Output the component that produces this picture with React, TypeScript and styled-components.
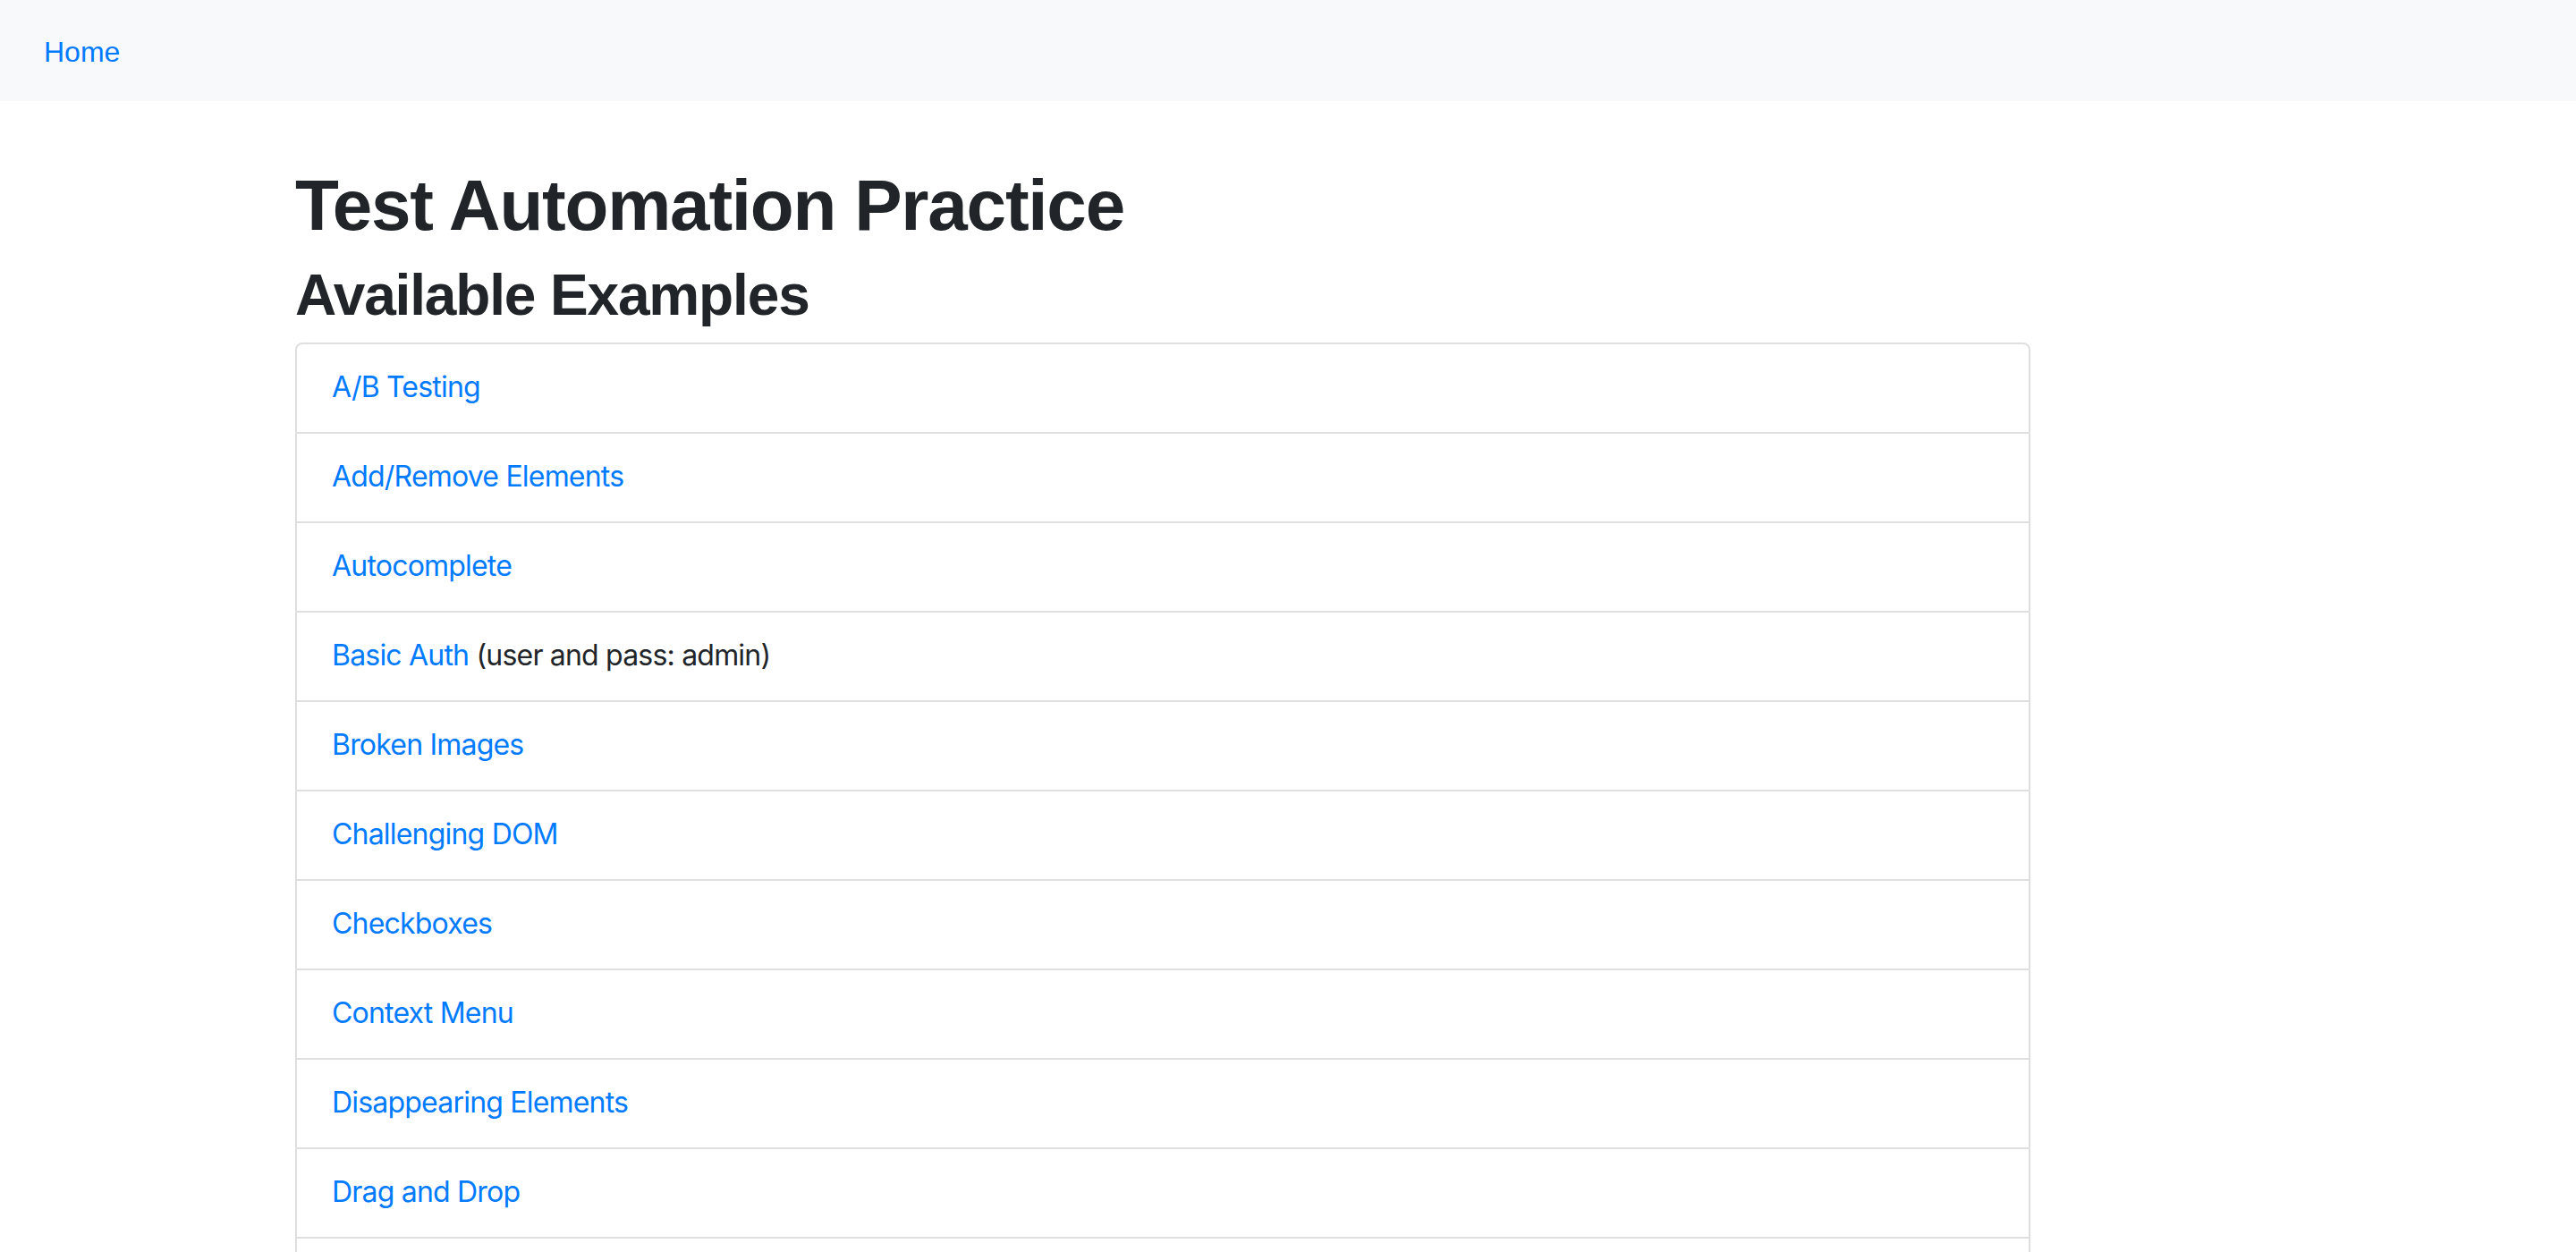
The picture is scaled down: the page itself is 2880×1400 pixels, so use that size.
import React from "react";
import styled, { createGlobalStyle } from "styled-components";

const GlobalStyle = createGlobalStyle`
  html, body {
    margin: 0;
    padding: 0;
    background: #ffffff;
    overflow: hidden;
  }
  body {
    font-family: Inter, "Liberation Sans", sans-serif;
    color: #212529;
  }
  * { box-sizing: border-box; }
`;

const NavBar = styled.nav`
  display: flex;
  align-items: center;
  height: 113px;
  background: #f8f9fa;
  padding: 0 0 0 49px;
`;

const NavLink = styled.a`
  font-family: "Liberation Sans", Arial, sans-serif;
  font-size: 32px;
  line-height: 48px;
  color: #007bff;
  text-decoration: none;
  padding-top: 3px;
`;

const Container = styled.main`
  width: 2220px;
  margin: 0 auto;
  padding-top: 69px;
`;

const Title = styled.h1`
  margin: 0 0 14px 0;
  font-family: "Liberation Sans", Arial, sans-serif;
  font-weight: 700;
  font-size: 80px;
  line-height: 96px;
  letter-spacing: -1.2px;
  color: #212529;
`;

const Subtitle = styled.h2`
  margin: 0 0 14px 0;
  font-family: "Liberation Sans", Arial, sans-serif;
  font-weight: 700;
  font-size: 64px;
  line-height: 77px;
  letter-spacing: -1.15px;
  color: #212529;
`;

const List = styled.ul`
  list-style: none;
  margin: 0;
  padding: 0;
  width: 1940px;
  border: 2px solid #dfdfdf;
  border-radius: 8px;
  overflow: hidden;
`;

const Item = styled.li`
  font-family: Inter, "Liberation Sans", sans-serif;
  font-size: 32px;
  line-height: 48px;
  letter-spacing: -0.8px;
  padding: 24px 40px 26px 39px;
  color: #212529;
  & + & {
    border-top: 2px solid #dfdfdf;
  }
`;

const ItemLink = styled.a`
  color: #007bff;
  text-decoration: none;
`;

type Example = { label: string; note?: string };

const examples: Example[] = [
  { label: "A/B Testing" },
  { label: "Add/Remove Elements" },
  { label: "Autocomplete" },
  { label: "Basic Auth", note: "(user and pass: admin)" },
  { label: "Broken Images" },
  { label: "Challenging DOM" },
  { label: "Checkboxes" },
  { label: "Context Menu" },
  { label: "Disappearing Elements" },
  { label: "Drag and Drop" },
  { label: "Dropdown" },
  { label: "Dynamic Content" },
];

export default function App() {
  return (
    <>
      <GlobalStyle />
      <NavBar>
        <NavLink href="#">Home</NavLink>
      </NavBar>
      <Container>
        <Title>Test Automation Practice</Title>
        <Subtitle>Available Examples</Subtitle>
        <List>
          {examples.map((ex) => (
            <Item key={ex.label}>
              <ItemLink href="#">{ex.label}</ItemLink>
              {ex.note ? ` ${ex.note}` : null}
            </Item>
          ))}
        </List>
      </Container>
    </>
  );
}
